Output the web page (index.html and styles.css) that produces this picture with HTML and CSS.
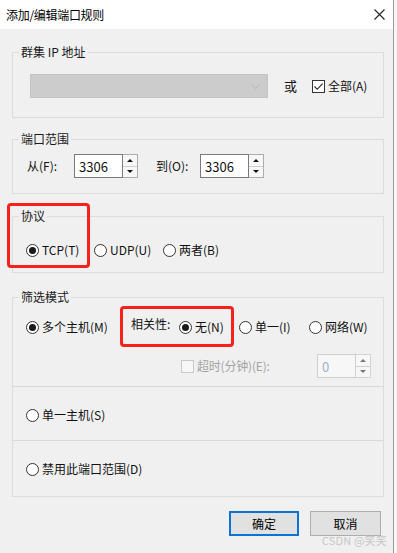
FILE: index.html
```html
<!DOCTYPE html>
<html lang="zh">
<head>
<meta charset="utf-8">
<title>添加/编辑端口规则</title>
<link rel="stylesheet" href="styles.css">
</head>
<body>
<div class="window">
  <div class="titlebar">
    <span class="title">添加/编辑端口规则</span>
    <svg class="close" width="11" height="11" viewBox="0 0 11 11"><path d="M0.5 0.5 L10.5 10.5 M10.5 0.5 L0.5 10.5" stroke="#222" stroke-width="1.1" fill="none"/></svg>
  </div>
  <div class="content">
    <div class="group g-ip">
      <div class="legend">群集 IP 地址</div>
      <div class="row ip-row">
        <div class="combo">
          <svg class="chev" width="9" height="5" viewBox="0 0 9 5"><path d="M0.5 0.5 L4.5 4.5 L8.5 0.5" stroke="#b4b4b4" fill="none"/></svg>
        </div>
        <span class="or">或</span>
        <span class="check">
          <span class="cbox"><svg width="11" height="11" viewBox="0 0 11 11"><path d="M1.5 5.5 L4.2 8.3 L9.6 2.6" stroke="#222" stroke-width="1.1" fill="none"/></svg></span>
          <span>全部(A)</span>
        </span>
      </div>
    </div>

    <div class="group g-port">
      <div class="legend">端口范围</div>
      <div class="row port-row">
        <span class="plabel w-from">从(F):</span>
        <div class="spin">
          <div class="field">3306</div>
          <div class="arrows"><span class="up"></span><span class="down"></span></div>
        </div>
        <span class="plabel w-to">到(O):</span>
        <div class="spin">
          <div class="field">3306</div>
          <div class="arrows"><span class="up"></span><span class="down"></span></div>
        </div>
      </div>
    </div>

    <div class="group g-proto">
      <div class="legend">协议</div>
      <div class="row radio-row">
        <span class="opt w-tcp"><span class="radio on"></span>TCP(T)</span>
        <span class="opt w-udp"><span class="radio"></span>UDP(U)</span>
        <span class="opt"><span class="radio"></span>两者(B)</span>
      </div>
      <div class="mark mark-proto"></div>
    </div>

    <div class="group g-filter">
      <div class="legend">筛选模式</div>
      <div class="section first">
        <div class="row radio-row multi-row">
          <span class="opt w-multi"><span class="radio on"></span>多个主机(M)</span>
          <span class="affinity">相关性:</span>
          <span class="opt w-none"><span class="radio on"></span>无(N)</span>
          <span class="opt w-single"><span class="radio"></span>单一(I)</span>
          <span class="opt"><span class="radio"></span>网络(W)</span>
        </div>
        <div class="row timeout-row">
          <span class="cbox disabled"></span>
          <span class="dis-text">超时(分钟)(E):</span>
          <div class="spin disabled-spin">
            <div class="field small">0</div>
            <div class="arrows"><span class="up"></span><span class="down"></span></div>
          </div>
        </div>
      </div>
      <div class="section mid">
        <div class="row radio-row">
          <span class="opt"><span class="radio"></span>单一主机(S)</span>
        </div>
      </div>
      <div class="section last">
        <div class="row radio-row">
          <span class="opt"><span class="radio"></span>禁用此端口范围(D)</span>
        </div>
      </div>
      <div class="mark mark-aff"></div>
    </div>

    <div class="buttons">
      <button class="btn primary">确定</button>
      <button class="btn">取消</button>
    </div>
  </div>
  <div class="watermark">CSDN @笑笑</div>
</div>
</body>
</html>
```

FILE: styles.css
```css
* { box-sizing: border-box; }
html, body {
  margin: 0;
  padding: 0;
  background: #f7f7f7;
}
body {
  font-family: "Noto Sans CJK SC", "Noto Sans", sans-serif;
  font-size: 12px;
  line-height: 16px;
  color: #111;
}
.window {
  position: relative;
  width: 394px;
  height: 553px;
  background: #f0f0f0;
  border-right: 1px solid #9a9a9a;
}
.titlebar {
  height: 29px;
  background: #fff;
  display: flex;
  align-items: center;
  justify-content: space-between;
  padding: 0 8px 0 6px;
}
.title { font-size: 12px; color: #000; letter-spacing: -0.3px; }
.content {
  padding: 23px 0 0 12px;
}
.group {
  position: relative;
  width: 372px;
  border: 1px solid #dcdcdc;
}
.legend {
  position: absolute;
  top: -9px;
  left: 6px;
  padding: 0 2px;
  background: #f0f0f0;
  color: #1a1a1a;
  line-height: 16px;
}
.row {
  display: flex;
  align-items: center;
}

/* group 1 */
.g-ip { padding: 21px 0 19px 17px; }
.combo {
  position: relative;
  width: 238px;
  height: 24px;
  background: #cccccc;
  border: 1px solid #c4c4c4;
  display: flex;
  align-items: center;
  justify-content: flex-end;
  padding-right: 7px;
}
.or { margin-left: 16px; font-size: 13px; }
.check { display: inline-flex; align-items: center; margin-left: 15px; gap: 3px; }
.cbox {
  width: 13px;
  height: 13px;
  border: 1px solid #333;
  background: #fff;
  display: inline-flex;
  align-items: center;
  justify-content: center;
}
.cbox.disabled { border-color: #c8c8c8; background: #f7f7f7; }

/* group 2 */
.g-port { margin-top: 21px; padding: 14px 0 15px 14px; }
.plabel { display: inline-block; }
.w-from { width: 47px; }
.w-to { width: 44px; margin-left: 18px; }
.spin { display: flex; height: 24px; }
.field {
  width: 49px;
  height: 24px;
  background: #fff;
  border: 1px solid #7a7a7a;
  padding: 3px 0 0 4px;
  font-size: 13px;
  line-height: 17px;
}
.arrows {
  width: 15px;
  height: 24px;
  border: 1px solid #adadad;
  border-left: none;
  background: #f7f7f7;
  display: flex;
  flex-direction: column;
}
.arrows span {
  flex: 1;
  display: flex;
  align-items: center;
  justify-content: center;
}
.arrows .up { border-bottom: 1px solid #cfcfcf; }
.arrows .up::before, .arrows .down::before {
  content: "";
  width: 0;
  height: 0;
  border-left: 3px solid transparent;
  border-right: 3px solid transparent;
}
.arrows .up::before { border-bottom: 3px solid #111; }
.arrows .down::before { border-top: 3px solid #111; }

/* radios */
.radio-row { height: 16px; }
.opt { display: inline-flex; align-items: center; gap: 3px; white-space: nowrap; }
.radio {
  width: 13px;
  height: 13px;
  border: 1px solid #333;
  border-radius: 50%;
  background: #fff;
  display: inline-flex;
  align-items: center;
  justify-content: center;
}
.radio.on::after {
  content: "";
  width: 7px;
  height: 7px;
  border-radius: 50%;
  background: #1a1a1a;
}

/* group 3 */
.g-proto { margin-top: 22px; padding: 25px 0 14px 13px; }
.w-tcp { width: 68px; }
.w-udp { width: 69px; }

/* group 4 */
.g-filter { margin-top: 24px; }
.section { padding-left: 13px; }
.section.first { padding-top: 21px; padding-bottom: 8px; border-bottom: 1px solid #d9d9d9; }
.section.mid { padding-top: 20px; padding-bottom: 17px; border-bottom: 1px solid #d9d9d9; }
.section.last { padding-top: 20px; padding-bottom: 19px; }
.w-multi { width: 105px; }
.affinity { width: 48px; margin-top: -7px; }
.w-none { width: 60px; }
.w-single { width: 70px; }
.timeout-row { margin-top: 19px; height: 24px; padding-right: 12px; }
.timeout-row .cbox { margin-left: 155px; }
.dis-text { margin-left: 3px; color: #a3a3a3; letter-spacing: -0.2px; }
.disabled-spin { margin-left: auto; }
.field.small {
  width: 39px;
  border-color: #cfcfcf;
  color: #9fb0c8;
  background: #f7f7f7;
}
.disabled-spin .arrows { border-color: #d4d4d4; }
.disabled-spin .arrows .up::before { border-bottom-color: #777; }
.disabled-spin .arrows .down::before { border-top-color: #777; }

/* highlight marks */
.mark {
  position: absolute;
  border: 3px solid #f5211b;
  border-radius: 4px;
}
.mark-proto { left: -6px; top: -14px; width: 83px; height: 65px; }
.mark-aff { left: 107px; top: 8px; width: 114px; height: 41px; }

/* buttons */
.buttons {
  display: flex;
  justify-content: flex-end;
  gap: 11px;
  width: 369px;
  margin-top: 14px;
}
.btn {
  width: 71px;
  height: 25px;
  font-family: inherit;
  font-size: 12px;
  color: #000;
  background: #e1e1e1;
  border: 1px solid #adadad;
  padding: 0;
}
.btn.primary { border: 2px solid #0a74d6; width: 70px; }
.watermark {
  position: absolute;
  right: 6px;
  bottom: 5px;
  font-size: 11px;
  color: #c7c7c7;
  letter-spacing: 0.2px;
}
```
